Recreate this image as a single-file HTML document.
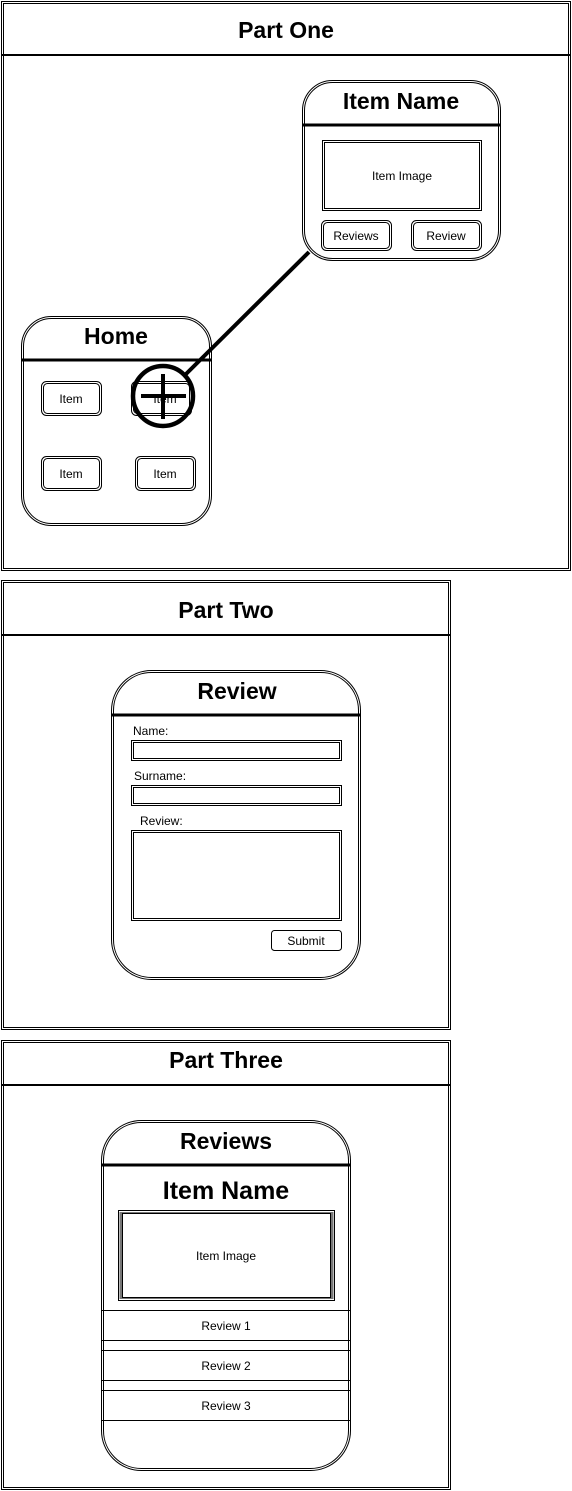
<!DOCTYPE html>
<html><head><meta charset="utf-8"><style>
html,body{margin:0;padding:0;background:#fff;width:572px;height:1491px;overflow:hidden}
svg text{font-family:"Liberation Sans",Arial,sans-serif;fill:#000}
.b{font-weight:bold}
</style></head><body>
<svg width="572" height="1491" viewBox="0 0 572 1491" xmlns="http://www.w3.org/2000/svg">
<g fill="none" stroke="#000" stroke-width="1">
<rect x="1.5" y="1.5" width="569" height="569"/><rect x="3.5" y="3.5" width="565" height="565"/>
<line x1="2" y1="55" x2="570" y2="55" stroke-width="2"/>
<rect x="302.5" y="80.5" width="198" height="180" rx="30"/><rect x="304.5" y="82.5" width="194" height="176" rx="28"/>
<line x1="303" y1="125" x2="500" y2="125" stroke-width="3"/>
<rect x="322.5" y="140.5" width="159" height="70"/><rect x="324.5" y="142.5" width="155" height="66"/>
<rect x="321.5" y="220.5" width="70" height="30" rx="5"/><rect x="323.5" y="222.5" width="66" height="26" rx="4"/>
<rect x="411.5" y="220.5" width="70" height="30" rx="5"/><rect x="413.5" y="222.5" width="66" height="26" rx="4"/>
<rect x="21.5" y="316.5" width="190" height="209" rx="30"/><rect x="23.5" y="318.5" width="186" height="205" rx="28"/>
<line x1="22" y1="360" x2="211" y2="360" stroke-width="3"/>
<rect x="41.5" y="381.5" width="60" height="34" rx="5"/><rect x="43.5" y="383.5" width="56" height="30" rx="4"/>
<rect x="131.5" y="381.5" width="60" height="34" rx="5"/><rect x="133.5" y="383.5" width="56" height="30" rx="4"/>
<rect x="41.5" y="456.5" width="60" height="34" rx="5"/><rect x="43.5" y="458.5" width="56" height="30" rx="4"/>
<rect x="135.5" y="456.5" width="60" height="34" rx="5"/><rect x="137.5" y="458.5" width="56" height="30" rx="4"/>
<line x1="309" y1="252" x2="184" y2="376" stroke-width="4"/>
<circle cx="163" cy="396" r="30" stroke-width="4.5" fill="none"/>
<line x1="141" y1="396" x2="186" y2="396" stroke-width="4"/>
<line x1="163" y1="374" x2="163" y2="419" stroke-width="4"/>

<rect x="1.5" y="580.5" width="449" height="449"/><rect x="3.5" y="582.5" width="445" height="445"/>
<line x1="2" y1="635" x2="450" y2="635" stroke-width="2"/>
<rect x="111.5" y="670.5" width="249" height="309" rx="40"/><rect x="113.5" y="672.5" width="245" height="305" rx="38"/>
<line x1="112" y1="715" x2="360" y2="715" stroke-width="3"/>
<rect x="131.5" y="740.5" width="210" height="20"/><rect x="133.5" y="742.5" width="206" height="16"/>
<rect x="131.5" y="785.5" width="210" height="20"/><rect x="133.5" y="787.5" width="206" height="16"/>
<rect x="131.5" y="830.5" width="210" height="90"/><rect x="133.5" y="832.5" width="206" height="86"/>
<rect x="271.5" y="930.5" width="70" height="20" rx="3"/>

<rect x="1.5" y="1040.5" width="449" height="449"/><rect x="3.5" y="1042.5" width="445" height="445"/>
<line x1="2" y1="1085" x2="450" y2="1085" stroke-width="2"/>
<rect x="101.5" y="1120.5" width="249" height="350" rx="40"/><rect x="103.5" y="1122.5" width="245" height="346" rx="38"/>
<line x1="102" y1="1165" x2="350" y2="1165" stroke-width="3"/>
<rect x="118.5" y="1210.5" width="216" height="90"/>
<line x1="121" y1="1212" x2="121" y2="1299" stroke="#777" stroke-width="3"/>
<line x1="332" y1="1212" x2="332" y2="1299" stroke="#777" stroke-width="3"/>
<line x1="120" y1="1212.5" x2="333" y2="1212.5" stroke="#777"/>
<line x1="120" y1="1298.5" x2="333" y2="1298.5" stroke="#777"/>
<rect x="122.5" y="1213.5" width="208" height="84"/>
<line x1="102" y1="1310.5" x2="350" y2="1310.5"/><line x1="102" y1="1340.5" x2="350" y2="1340.5"/>
<line x1="102" y1="1350.5" x2="350" y2="1350.5"/><line x1="102" y1="1380.5" x2="350" y2="1380.5"/>
<line x1="102" y1="1390.5" x2="350" y2="1390.5"/><line x1="102" y1="1420.5" x2="350" y2="1420.5"/>
</g>
<g text-anchor="middle">
<text x="286" y="38" class="b" font-size="23">Part One</text>
<text x="401" y="109" class="b" font-size="23">Item Name</text>
<text x="402" y="180" font-size="12">Item Image</text>
<text x="356" y="240" font-size="12">Reviews</text>
<text x="446" y="240" font-size="12">Review</text>
<text x="116" y="344" class="b" font-size="23">Home</text>
<text x="71" y="403" font-size="12">Item</text>
<text x="165" y="403" font-size="12">Item</text>
<text x="71" y="478" font-size="12">Item</text>
<text x="165" y="478" font-size="12">Item</text>
<text x="226" y="618" class="b" font-size="23">Part Two</text>
<text x="237" y="699" class="b" font-size="23">Review</text>
<text x="306" y="945" font-size="12">Submit</text>
<text x="226" y="1068" class="b" font-size="23">Part Three</text>
<text x="226" y="1149" class="b" font-size="23">Reviews</text>
<text x="226" y="1199" class="b" font-size="25">Item Name</text>
<text x="226" y="1260" font-size="12">Item Image</text>
<text x="226" y="1330" font-size="12">Review 1</text>
<text x="226" y="1370" font-size="12">Review 2</text>
<text x="226" y="1410" font-size="12">Review 3</text>
</g>
<text x="133" y="735" font-size="12">Name:</text>
<text x="134" y="780" font-size="12">Surname:</text>
<text x="140" y="825" font-size="12">Review:</text>
</svg>
</body></html>
